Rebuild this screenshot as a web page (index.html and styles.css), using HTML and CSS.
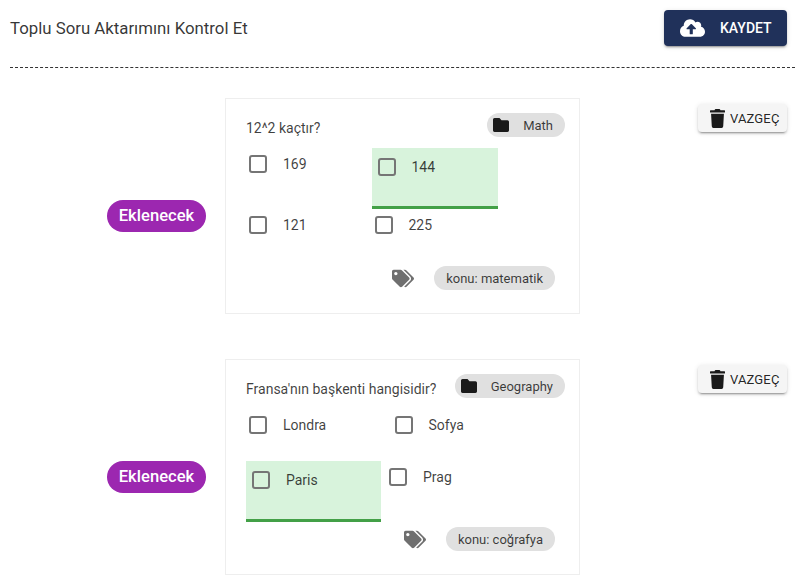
FILE: index.html
```html
<!DOCTYPE html>
<html lang="tr">
<head>
<meta charset="utf-8">
<title>Toplu Soru Aktarımını Kontrol Et</title>
<link rel="stylesheet" href="styles.css">
</head>
<body>
<header class="header">
  <h1 class="title">Toplu Soru Aktarımını Kontrol Et</h1>
  <button class="save-btn" type="button">
    <svg class="save-icon" viewBox="0 0 640 512"><path d="M537.6 226.6c4.1-10.7 6.4-22.4 6.4-34.6 0-53-43-96-96-96-19.7 0-38.1 6-53.3 16.2C367 64.2 315.3 32 256 32c-88.4 0-160 71.6-160 160 0 2.7.1 5.4.2 8.1C40.2 219.8 0 273.2 0 336c0 79.5 64.5 144 144 144h368c70.7 0 128-57.3 128-128 0-61.9-44-113.6-102.4-125.4zM393.4 288H328v112c0 8.8-7.2 16-16 16h-48c-8.8 0-16-7.2-16-16V288h-65.4c-14.3 0-21.4-17.2-11.3-27.3l105.4-105.4c6.2-6.2 16.4-6.2 22.6 0l105.4 105.4c10.1 10.1 2.9 27.3-11.3 27.3z"/></svg>
    <span>KAYDET</span>
  </button>
</header>
<div class="divider"></div>
<main class="list">
  <section class="item">
    <div class="status-col"><span class="status">Eklenecek</span></div>
    <article class="card">
      <div class="card-top">
        <p class="question">12^2 kaçtır?</p>
        <span class="chip category">
          <svg class="folder-icon" viewBox="0 64 512 384" preserveAspectRatio="none"><path d="M464 128H272l-64-64H48C21.49 64 0 85.49 0 112v288c0 26.51 21.49 48 48 48h416c26.51 0 48-21.49 48-48V176c0-26.51-21.49-48-48-48z"/></svg>
          <span>Math</span>
        </span>
      </div>
      <div class="options">
        <div class="opt w126"><span class="box"></span><span>169</span></div>
        <div class="opt correct w127"><span class="box"></span><span>144</span></div>
      </div>
      <div class="options">
        <div class="opt w126"><span class="box"></span><span>121</span></div>
        <div class="opt"><span class="box"></span><span>225</span></div>
      </div>
      <div class="tags">
        <svg class="tag-icon" viewBox="0 0 640 512"><path d="M497.941 225.941L286.059 14.059A48 48 0 0 0 252.118 0H48C21.49 0 0 21.49 0 48v204.118a48 48 0 0 0 14.059 33.941l211.882 211.882c18.744 18.745 49.136 18.746 67.882 0l204.118-204.118c18.745-18.745 18.745-49.137 0-67.882zM112 160c-26.51 0-48-21.49-48-48s21.49-48 48-48 48 21.49 48 48-21.49 48-48 48zm513.941 133.823L421.823 497.941c-18.745 18.745-49.137 18.745-67.882 0l-.36-.36L527.64 323.522c16.999-16.999 26.36-39.6 26.36-63.64s-9.362-46.641-26.36-63.64L331.397 0h48.721a48 48 0 0 1 33.941 14.059l211.882 211.882c18.745 18.745 18.745 49.137 0 67.882z"/></svg>
        <span class="chip tag">konu: matematik</span>
      </div>
    </article>
    <div class="action-col">
      <button class="cancel-btn" type="button">
        <svg class="trash-icon" viewBox="0 0 448 512" preserveAspectRatio="none"><path d="M432 32H312l-9.4-18.7A24 24 0 0 0 281.1 0H166.8a23.72 23.72 0 0 0-21.4 13.3L136 32H16A16 16 0 0 0 0 48v32a16 16 0 0 0 16 16h416a16 16 0 0 0 16-16V48a16 16 0 0 0-16-16zM53.2 467a48 48 0 0 0 47.9 45h245.8a48 48 0 0 0 47.9-45L416 128H32z"/></svg>
        <span>VAZGEÇ</span>
      </button>
    </div>
  </section>
  <section class="item">
    <div class="status-col"><span class="status">Eklenecek</span></div>
    <article class="card">
      <div class="card-top">
        <p class="question">Fransa'nın başkenti hangisidir?</p>
        <span class="chip category">
          <svg class="folder-icon" viewBox="0 64 512 384" preserveAspectRatio="none"><path d="M464 128H272l-64-64H48C21.49 64 0 85.49 0 112v288c0 26.51 21.49 48 48 48h416c26.51 0 48-21.49 48-48V176c0-26.51-21.49-48-48-48z"/></svg>
          <span>Geography</span>
        </span>
      </div>
      <div class="options">
        <div class="opt w146"><span class="box"></span><span>Londra</span></div>
        <div class="opt"><span class="box"></span><span>Sofya</span></div>
      </div>
      <div class="options gap5">
        <div class="opt correct w135"><span class="box"></span><span>Paris</span></div>
        <div class="opt"><span class="box"></span><span>Prag</span></div>
      </div>
      <div class="tags">
        <svg class="tag-icon" viewBox="0 0 640 512"><path d="M497.941 225.941L286.059 14.059A48 48 0 0 0 252.118 0H48C21.49 0 0 21.49 0 48v204.118a48 48 0 0 0 14.059 33.941l211.882 211.882c18.744 18.745 49.136 18.746 67.882 0l204.118-204.118c18.745-18.745 18.745-49.137 0-67.882zM112 160c-26.51 0-48-21.49-48-48s21.49-48 48-48 48 21.49 48 48-21.49 48-48 48zm513.941 133.823L421.823 497.941c-18.745 18.745-49.137 18.745-67.882 0l-.36-.36L527.64 323.522c16.999-16.999 26.36-39.6 26.36-63.64s-9.362-46.641-26.36-63.64L331.397 0h48.721a48 48 0 0 1 33.941 14.059l211.882 211.882c18.745 18.745 18.745 49.137 0 67.882z"/></svg>
        <span class="chip tag">konu: coğrafya</span>
      </div>
    </article>
    <div class="action-col">
      <button class="cancel-btn" type="button">
        <svg class="trash-icon" viewBox="0 0 448 512" preserveAspectRatio="none"><path d="M432 32H312l-9.4-18.7A24 24 0 0 0 281.1 0H166.8a23.72 23.72 0 0 0-21.4 13.3L136 32H16A16 16 0 0 0 0 48v32a16 16 0 0 0 16 16h416a16 16 0 0 0 16-16V48a16 16 0 0 0-16-16zM53.2 467a48 48 0 0 0 47.9 45h245.8a48 48 0 0 0 47.9-45L416 128H32z"/></svg>
        <span>VAZGEÇ</span>
      </button>
    </div>
  </section>
</main>
</body>
</html>
```
FILE: styles.css
```css
* { box-sizing: border-box; }
html, body { margin: 0; background: #fff; }
body {
  width: 804px;
  height: 585px;
  overflow: hidden;
  font-family: Roboto, "Liberation Sans", sans-serif;
  font-size: 14px;
  color: rgba(0, 0, 0, 0.75);
}
svg { display: block; fill: currentColor; flex: none; }

.header {
  display: flex;
  align-items: center;
  justify-content: space-between;
  padding: 10px 17px 0 10px;
}
.title { margin: 0; font-size: 16.8px; font-weight: 400; line-height: 36px; color: rgba(0, 0, 0, 0.8); }
.save-btn {
  display: flex;
  align-items: center;
  width: 123px;
  height: 36px;
  padding: 0 0 0 16px;
  border: 0;
  border-radius: 4px;
  background: #20315a;
  color: #fff;
  font: 500 14px Roboto, sans-serif;
  box-shadow: 0 3px 1px -2px rgba(0,0,0,.2), 0 2px 2px 0 rgba(0,0,0,.14), 0 1px 5px 0 rgba(0,0,0,.12);
}
.save-icon { width: 25px; height: 20px; margin-right: 15px; }

.divider { margin: 21px 9px 0 10px; height: 1px; border-top: 1px dashed #333; }

.list { display: flex; flex-direction: column; gap: 45px; margin-top: 30px; }
.item { display: flex; align-items: flex-start; }
.status-col { width: 225px; height: 216px; display: flex; align-items: center; justify-content: flex-end; padding: 20px 19px 0 0; }
.status {
  display: block;
  width: 99px;
  height: 32px;
  border-radius: 16px;
  background: #9c27b0;
  color: #fff;
  font-size: 16.6px;
  font-weight: 500;
  line-height: 32px;
  text-align: center;
}
.card {
  width: 355px;
  height: 216px;
  padding: 14px 14px 0 20px;
  border: 1px solid #eee;
}
.card-top { display: flex; align-items: center; justify-content: space-between; height: 24px; margin-bottom: 11px; }
.question { margin: 6px 0 0; font-size: 14px; }
.chip { display: flex; align-items: center; height: 24px; border-radius: 12px; background: #e0e0e0; font-size: 13px; }
.category { padding: 0 12px 0 6px; }
.folder-icon { width: 16px; height: 14px; margin-right: 14px; color: #1a1a1a; }

.options { display: flex; }
.gap5 { gap: 5px; }
.opt { display: flex; align-items: flex-start; gap: 16px; min-height: 52px; padding: 7px 3px; line-height: 18px; }
.opt.correct { height: 61px; padding: 10px 6px; background: #d8f3dc; border-bottom: 3px solid #43a047; }
.w126 { width: 125.5px; }
.w127 { width: 126.5px; }
.w135 { width: 135px; }
.w146 { width: 145.5px; }
.box { width: 18px; height: 18px; border: 2px solid #757575; border-radius: 3px; flex: none; }

.tags { display: flex; align-items: center; justify-content: flex-end; gap: 20px; margin-top: 5px; padding-right: 10px; }
.tag { padding: 0 12px; }
.tag-icon { width: 22px; height: 19px; color: #6f6f6f; }

.action-col { flex: 1; display: flex; justify-content: flex-end; padding: 6px 17px 0 0; }
.cancel-btn {
  display: flex;
  align-items: center;
  gap: 5px;
  width: 89px;
  height: 28px;
  padding: 0 0 0 12px;
  border: 0;
  border-radius: 4px;
  background: #f5f5f5;
  color: rgba(0,0,0,.87);
  font: 400 13px Roboto, sans-serif;
  letter-spacing: .15px;
  box-shadow: 0 3px 1px -2px rgba(0,0,0,.2), 0 2px 2px 0 rgba(0,0,0,.14), 0 1px 5px 0 rgba(0,0,0,.12);
}
.trash-icon { width: 15px; height: 19px; color: #1a1a1a; }
```
